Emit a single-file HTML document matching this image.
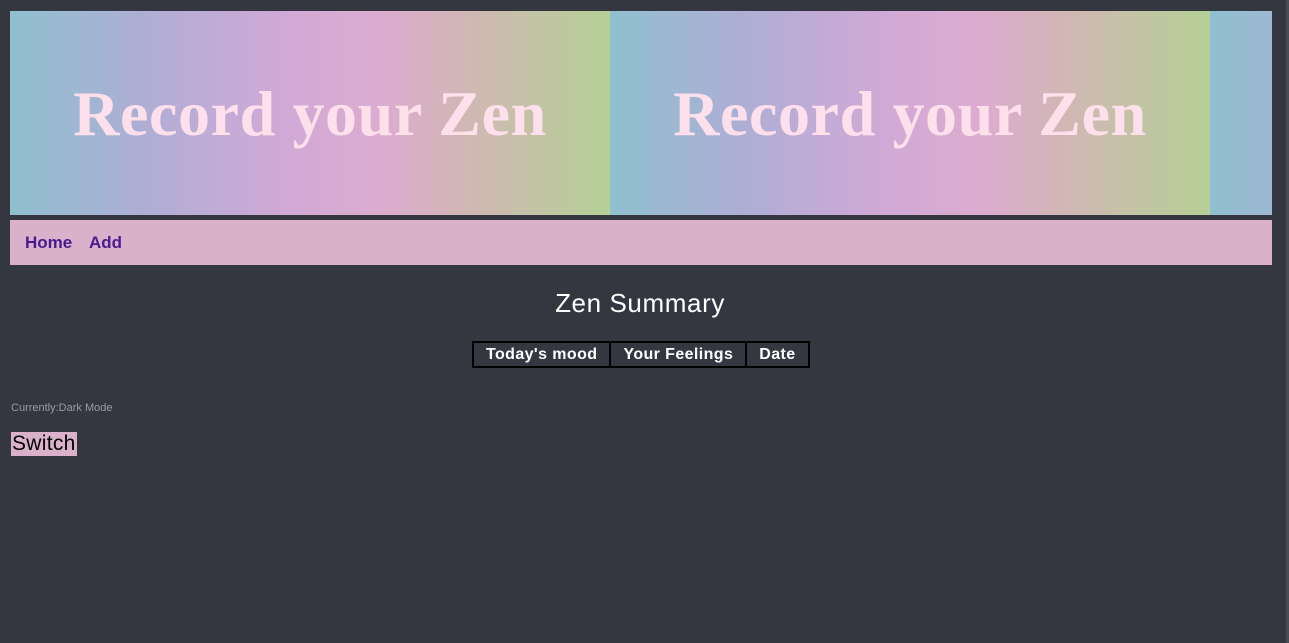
<!DOCTYPE html>
<html><head><style>
html,body{margin:0;padding:0;background:#353740;width:1289px;height:643px;overflow:hidden;font-family:"Liberation Sans",sans-serif}
.banner{position:absolute;left:10px;top:11px;width:1262px;height:204px;overflow:hidden;display:flex}
.tile{flex:0 0 600px;height:204px;background:linear-gradient(90deg,#8fc0cf 0%,#aeaed5 22%,#d0a9d6 45%,#dcacd0 62%,#d2b6b6 75%,#b5d095 100%);position:relative}
.tile span{position:absolute;left:0;width:600px;text-align:center;top:66px;font-family:"Liberation Serif",serif;font-weight:bold;font-size:64px;color:#fde0ec;letter-spacing:0.6px;white-space:nowrap}
.nav{position:absolute;left:10px;top:220px;width:1262px;height:45px;background:#d9b1cb}
.nav a{position:absolute;top:13px;font-size:17px;font-weight:bold;color:#4b1a8e;text-decoration:none}
h1{position:absolute;top:288px;left:0;width:1280px;text-align:center;margin:0;font-size:26px;letter-spacing:0.6px;font-weight:normal;color:#fff}
table{position:absolute;left:472px;top:341px;border-collapse:collapse;border:2px solid #000}
td{border:2px solid #000;color:#fff;font-weight:bold;font-size:16px;letter-spacing:0.4px;padding:2px 12px;height:19px}
.cur{position:absolute;left:11px;top:402px;font-size:11px;color:#9a9aa0}
.sw{position:absolute;left:11px;top:432px;height:24px;padding:0 1px;background:#d9b1cb;color:#000;font-size:21px;letter-spacing:0.3px;line-height:24px}
.edge{position:absolute;right:0;top:0;width:3px;height:643px;background:#4a4c54}
</style></head><body>
<div class="banner"><div class="tile"><span>Record your Zen</span></div><div class="tile"><span>Record your Zen</span></div><div class="tile"></div></div>
<div class="nav"><a style="left:15px">Home</a><a style="left:79px">Add</a></div>
<h1>Zen Summary</h1>
<table><tr><td>Today's mood</td><td>Your Feelings</td><td>Date</td></tr></table>
<div class="cur">Currently:Dark Mode</div>
<div class="sw">Switch</div>
<div class="edge"></div>
</body></html>
